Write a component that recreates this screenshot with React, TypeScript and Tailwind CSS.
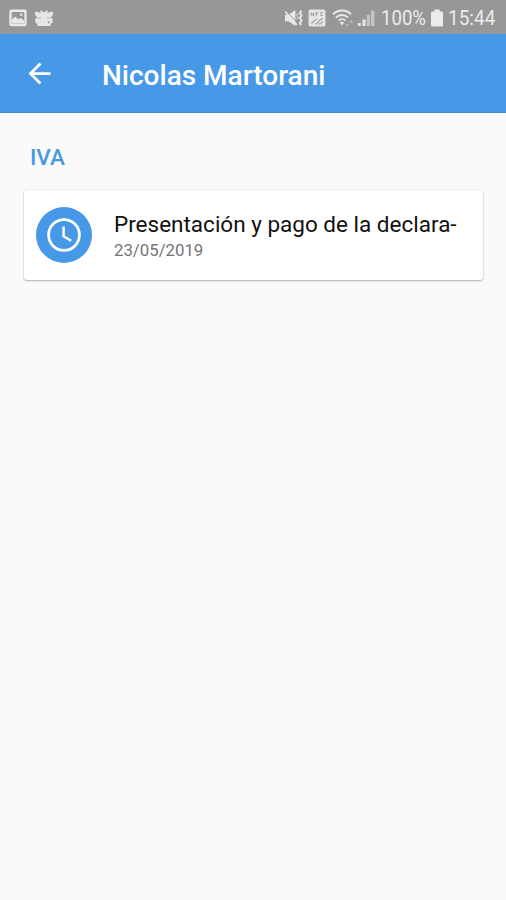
import React from "react";

interface IconProps {
    className?: string;
}

interface Task {
    title: string;
    date: string;
}

interface TaskGroup {
    name: string;
    tasks: Task[];
}

const groups: TaskGroup[] = [
    {
        name: "IVA",
        tasks: [{ title: "Presentación y pago de la declara-", date: "23/05/2019" }],
    },
];

function PictureIcon({ className }: IconProps) {
    return (
        <svg viewBox="0 0 18 18" className={className} fill="none">
            <rect x="1.5" y="1.8" width="15" height="14.2" rx="1" stroke="#e9e9e9" strokeWidth="2.4" />
            <path d="M3 14.5v-4l3.2-3 3 2.8 2.6-1.4 3.2 2.6v3z" fill="#e9e9e9" />
            <path d="M11 4.6h2.4v2.2H11z" fill="#e0e0e0" />
        </svg>
    );
}

function CastleIcon({ className }: IconProps) {
    return (
        <svg viewBox="0 0 20 18" className={className} fill="#e6e6e6">
            <path d="M1 2.4l3.8.8 1.6.8V1.4h2V3h3.2V1.4h2V4l1.6-.8 3.8-.8-.4 4-1.8 1.8 1.8 1.6V14l-2 .4V17H3.4v-2.6l-2-.4V9.8l1.8-1.6-1.8-1.8z" />
            <path d="M3.4 9h3.4M13.2 9h3.4" stroke="#aaaaaa" strokeWidth="0.9" />
            <path d="M14.2 12.4l1 1.6" stroke="#979797" strokeWidth="1.5" />
        </svg>
    );
}

function MuteVibrateIcon({ className }: IconProps) {
    return (
        <svg viewBox="0 0 20 18" className={className} fill="none">
            <path d="M1 5.8h3.4L11.4 1v16l-7-4.8H1z" fill="#e9e9e9" />
            <path d="M2 1.4l11 12.4" stroke="#979797" strokeWidth="1" />
            <path d="M1.2 2.4L13 16" stroke="#e9e9e9" strokeWidth="1.6" />
            <path d="M17.6 1.6l-1.8 2.5 1.8 2.5-1.8 2.5 1.8 2.5-1.8 2.5 1.4 2" stroke="#e4e4e4" strokeWidth="2" />
            <path d="M14 4.4l-1.2 2 1.2 2.2-1.2 2" stroke="#d4d4d4" strokeWidth="1.1" />
        </svg>
    );
}

function NfcIcon({ className }: IconProps) {
    return (
        <svg viewBox="0 0 18 18" className={className} fill="none">
            <rect x="0.6" y="0.6" width="16.8" height="16.8" rx="1.6" fill="#e5e5e5" />
            <path d="M3.2 7V3.4L5.6 7V3.4M8 7V3.6h2M8 5.4h1.6M15 3.6h-2.2v3H15" stroke="#a2a2a2" strokeWidth="1" />
            <path d="M3.2 14c2.6 1 2.4-4.2 6-4M7 15c3.2.4 2.8-3.8 7.6-5.6M11 15.2c1.6-.4 2.4-1.4 3.6-2.8" stroke="#a2a2a2" strokeWidth="1.2" />
        </svg>
    );
}

function WifiIcon({ className }: IconProps) {
    return (
        <svg viewBox="0 0 24 20" className={className} fill="none">
            <path d="M1 6.4C6 1.3 14 1.3 19 6.4" stroke="#e9e9e9" strokeWidth="2" />
            <path d="M3.9 9.5c3.4-3.4 8.8-3.4 12.2 0" stroke="#e9e9e9" strokeWidth="1.9" />
            <path d="M6.7 12.5c1.9-1.9 4.7-1.9 6.6 0" stroke="#e9e9e9" strokeWidth="1.8" />
            <path d="M7.8 14.6c1.2-1.1 3.2-1.1 4.4 0L10 17.4z" fill="#e9e9e9" />
            <path d="M13.6 16.2h3.6l-1.8 2.6zM17.4 14.6l1.9-2.6 1.9 2.6z" fill="#c0c0c0" />
        </svg>
    );
}

function SignalIcon({ className }: IconProps) {
    return (
        <svg viewBox="0 0 18 18" className={className}>
            <path d="M0.8 14h3v3H0.8zM5.4 10.4h3.2V17H5.4z" fill="#e5e5e5" />
            <path d="M9.8 6H13v11H9.8zM14 1.5h3.4V17H14z" fill="#c4c4c4" />
        </svg>
    );
}

function BatteryIcon({ className }: IconProps) {
    return (
        <svg viewBox="0 0 12 18" className={className} fill="#ececec">
            <path d="M3.4 0.5h5.2v2H11q1 0 1 1v13q0 1-1 1H1q-1 0-1-1v-13q0-1 1-1h2.4z" />
        </svg>
    );
}

function BackIcon({ className }: IconProps) {
    return (
        <svg viewBox="0 0 24 24" className={className} fill="currentColor">
            <path d="M20 11H7.83l5.59-5.59L12 4l-8 8 8 8 1.41-1.41L7.83 13H20v-2z" />
        </svg>
    );
}

function ClockIcon({ className }: IconProps) {
    return (
        <svg viewBox="0 0 40 40" className={className} fill="none" stroke="currentColor">
            <circle cx="20" cy="20" r="15.4" strokeWidth="2.8" />
            <path d="M19.6 11.6v9.6l7.6 4.6" strokeWidth="2.5" />
        </svg>
    );
}

function StatusBar() {
    return (
        <div className="flex h-[34px] items-center bg-[#979797] pt-px pl-[9px] text-xl text-[#ececec]">
            <PictureIcon className="h-[18px] w-[18px]" />
            <CastleIcon className="ml-[7px] h-[18px] w-5" />
            <MuteVibrateIcon className="ml-[230px] h-[18px] w-5" />
            <NfcIcon className="ml-1 h-[18px] w-[18px]" />
            <WifiIcon className="ml-1.5 h-5 w-6" />
            <SignalIcon className="ml-px h-[18px] w-[18px]" />
            <span className="ml-1.5 w-[50px] origin-left scale-x-[0.93] whitespace-nowrap leading-none">100%</span>
            <BatteryIcon className="h-[18px] w-3" />
            <span className="ml-[5px] origin-left scale-x-[0.95] whitespace-nowrap leading-none">15:44</span>
        </div>
    );
}

function AppHeader({ title }: { title: string }) {
    return (
        <header className="flex h-[79px] items-center border-b border-[#4489cf] bg-[#4799e8] pl-[23px] text-white">
            <button aria-label="Back">
                <BackIcon className="h-[33px] w-[33px]" />
            </button>
            <h1 className="ml-[46px] pt-1.5 text-[28px] leading-8 font-medium whitespace-nowrap">{title}</h1>
        </header>
    );
}

function TaskCard({ task }: { task: Task }) {
    return (
        <div className="flex h-[90px] items-center rounded-[3px] bg-white pl-3 shadow-[0_1px_2px_rgba(0,0,0,0.26),0_0_2px_rgba(0,0,0,0.12)]">
            <div className="flex h-14 w-14 shrink-0 items-center justify-center rounded-full bg-[#4799e8] text-white">
                <ClockIcon className="h-10 w-10" />
            </div>
            <div className="ml-[22px] pt-px whitespace-nowrap">
                <p className="text-[22.5px] leading-7 text-[#111]">{task.title}</p>
                <p className="text-[16.8px] leading-6 text-[#757575]">{task.date}</p>
            </div>
        </div>
    );
}

export default function App() {
    return (
        <div className="min-h-screen bg-[#fafafa] font-[Roboto,sans-serif]">
            <StatusBar />
            <AppHeader title="Nicolas Martorani" />
            <main className="pt-[30px] pr-[23px] pl-6">
                {groups.map((group) => (
                    <section key={group.name}>
                        <h2 className="mb-[19px] pl-1.5 text-[22.5px] leading-7 font-medium text-[#4799e0]">{group.name}</h2>
                        <div className="flex flex-col gap-3">
                            {group.tasks.map((task) => (
                                <TaskCard key={task.title} task={task} />
                            ))}
                        </div>
                    </section>
                ))}
            </main>
        </div>
    );
}
